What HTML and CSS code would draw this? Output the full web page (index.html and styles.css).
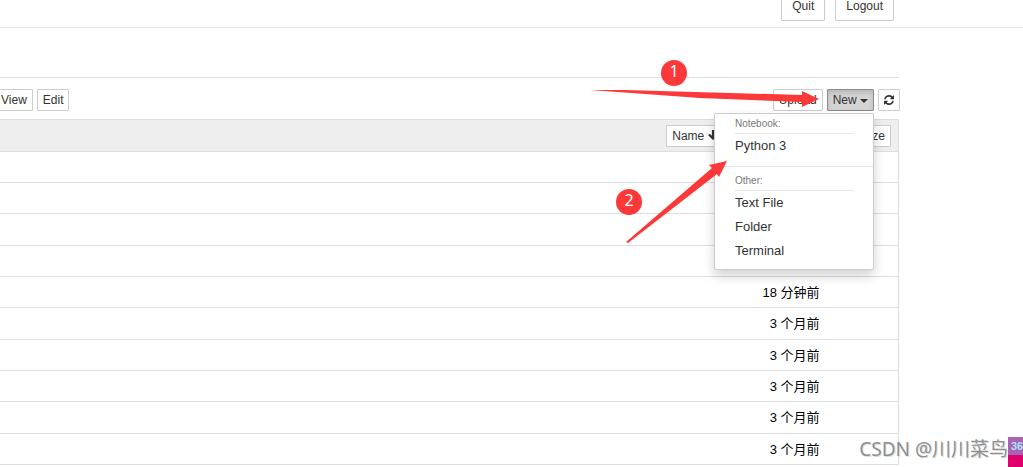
FILE: index.html
```html
<!DOCTYPE html>
<html lang="zh-CN">
<head>
    <meta charset="UTF-8">
    <meta name="viewport" content="width=device-width, initial-scale=1.0">
    <title>Home Page</title>
    <link rel="stylesheet" href="styles.css">
</head>
<body>
    <header class="header">
        <button type="button" class="btn btn-lg">Quit</button>
        <button type="button" class="btn btn-lg">Logout</button>
    </header>

    <main class="container">
        <div class="tabs"></div>
        <div class="toolbar">
            <div class="actions">
                <button type="button" class="btn">View</button>
                <button type="button" class="btn">Edit</button>
            </div>
            <div class="actions">
                <button type="button" class="btn">Upload</button>
                <div class="dropdown">
                    <button type="button" class="btn active" aria-expanded="true">New <span class="caret"></span></button>
                    <ul class="menu">
                        <li class="menu-title">Notebook:</li>
                        <li><a href="#">Python 3</a></li>
                        <li class="divider"></li>
                        <li class="menu-title">Other:</li>
                        <li><a href="#">Text File</a></li>
                        <li><a href="#">Folder</a></li>
                        <li><a href="#">Terminal</a></li>
                    </ul>
                </div>
                <button type="button" class="btn btn-icon" aria-label="Refresh">
                    <svg width="10" height="10" viewBox="0 0 1536 1536" fill="#333"><path d="M1511 928q0 5-1 7-64 268-268 434.500T764 1536q-146 0-282.500-55T238 1324l-129 129q-19 19-45 19t-45-19-19-45V960q0-26 19-45t45-19h448q26 0 45 19t19 45-19 45l-137 137q71 66 161 102t187 36q134 0 250-65t186-179q11-17 53-117 8-23 30-23h192q13 0 22.500 9.500t9.500 22.500zm25-800v448q0 26-19 45t-45 19h-448q-26 0-45-19t-19-45 19-45l138-138Q969 256 768 256q-134 0-250 65T332 500q-11 17-53 117-8 23-30 23H50q-13 0-22.500-9.500T18 608v-7q65-268 270-434.500T768 0q146 0 284 55.500T1297 212l130-129q19-19 45-19t45 19 19 45z"/></svg>
                </button>
            </div>
        </div>

        <table class="files">
            <thead>
                <tr>
                    <th colspan="3">
                        <div class="sort">
                            <button type="button" class="btn">Name <svg width="10" height="10" viewBox="0 0 10 10"><path d="M5 0v8M1 4.500l4 4 4-4" fill="none" stroke="#333" stroke-width="2.200"/></svg></button>
                            <button type="button" class="btn">Last Modified</button>
                            <button type="button" class="btn">File size</button>
                        </div>
                    </th>
                </tr>
            </thead>
            <tbody>
                <tr><td></td><td class="modified"></td><td class="size"></td></tr>
                <tr><td></td><td class="modified"></td><td class="size"></td></tr>
                <tr><td></td><td class="modified"></td><td class="size"></td></tr>
                <tr><td></td><td class="modified"></td><td class="size"></td></tr>
                <tr><td></td><td class="modified">18 分钟前</td><td class="size"></td></tr>
                <tr><td></td><td class="modified">3 个月前</td><td class="size"></td></tr>
                <tr><td></td><td class="modified">3 个月前</td><td class="size"></td></tr>
                <tr><td></td><td class="modified">3 个月前</td><td class="size"></td></tr>
                <tr><td></td><td class="modified">3 个月前</td><td class="size"></td></tr>
                <tr><td></td><td class="modified">3 个月前</td><td class="size"></td></tr>
            </tbody>
        </table>
    </main>

    <!-- numbered steps and arrows -->
    <svg class="steps" width="240" height="190" viewBox="585 55 240 190">
        <path d="M590 90L625 90L802 95V91L819 99L802 107V102L700 98Z"/>
        <path d="M626 242L712 168L709 165L727 161L719 177L717 174L628 243Z"/>
        <circle cx="674" cy="73" r="13"/>
        <circle cx="629" cy="202" r="13"/>
        <text x="674" y="77">1</text>
        <text x="629" y="206">2</text>
    </svg>

    <div class="corner">
        <span class="watermark">CSDN @川川菜鸟</span>
        <div class="meter"><span>36</span></div>
    </div>
</body>
</html>
```

FILE: styles.css
```css
* {
    box-sizing: border-box;
}

body {
    margin: 0;
    height: 100vh;
    overflow: hidden;
    background: #fff;
    color: #000;
    font-family: "Liberation Sans", "Noto Sans CJK SC", sans-serif;
    font-size: 13px;
    line-height: 20px;
}

.header {
    display: flex;
    justify-content: flex-end;
    align-items: flex-end;
    gap: 10px;
    height: 28px;
    padding: 0 129px 6px 0;
    border-bottom: 1px solid #e7e7e7;
}

.btn {
    height: 22px;
    padding: 0 5px;
    border: 1px solid #ccc;
    border-radius: 1px;
    background: #fff;
    color: #333;
    font-family: inherit;
    font-size: 12px;
    line-height: 18px;
    white-space: nowrap;
    cursor: pointer;
}

.btn-lg {
    height: 30px;
    padding: 0 10px;
}

.btn-icon svg {
    display: block;
}

.btn.active {
    border-color: #8c8c8c;
    background: #d4d4d4;
    box-shadow: inset 0 3px 5px rgba(0, 0, 0, 0.125);
}

.caret {
    display: inline-block;
    vertical-align: middle;
    border-top: 4px solid #333;
    border-left: 4px solid transparent;
    border-right: 4px solid transparent;
}

.container {
    margin-right: 124px;
}

.tabs {
    height: 50px;
    border-bottom: 1px solid #ddd;
}

.toolbar {
    display: flex;
    justify-content: space-between;
    margin: 0 -1px 0 -5px;
    padding: 11px 0 8px;
}

.actions {
    display: flex;
    gap: 4px;
}

.dropdown {
    position: relative;
}

.menu {
    position: absolute;
    top: 24px;
    right: 0;
    z-index: 1;
    width: 160px;
    margin: 0;
    padding: 0 0 6px;
    border: 1px solid #ccc;
    border-radius: 2px;
    background: #fff;
    box-shadow: 0 6px 12px rgba(0, 0, 0, 0.175);
    list-style: none;
}

.menu a {
    display: block;
    padding: 2px 20px;
    color: #333;
    text-decoration: none;
}

.menu-title {
    margin: 0 20px;
    border-bottom: 1px solid #e5e5e5;
    color: #777;
    font-size: 10px;
    line-height: 19px;
}

.divider {
    height: 1px;
    margin: 8px 0 4px;
    background: #e5e5e5;
}

.files {
    width: 100%;
    border: 1px solid #ddd;
    border-left: 0;
    border-collapse: collapse;
}

.files th {
    height: 32px;
    padding: 0 7px 0 0;
    background: #eee;
    font-weight: normal;
}

.sort {
    display: flex;
    justify-content: flex-end;
    gap: 14px;
}

.files tr {
    height: 31px;
    border-bottom: 1px solid #ddd;
}

.files tbody tr:nth-child(3n) {
    height: 32px;
}

.files td {
    padding: 1px 0 0;
}

.files .modified {
    width: 160px;
    text-align: right;
}

.files .size {
    width: 79px;
}

.steps {
    position: absolute;
    top: 55px;
    left: 585px;
    z-index: 2;
    fill: #fc3838;
    pointer-events: none;
}

.steps text {
    fill: #fff;
    font-family: "Noto Sans", sans-serif;
    font-size: 16px;
    text-anchor: middle;
}

.corner {
    position: absolute;
    right: 0;
    bottom: 0;
    display: flex;
    height: 30px;
}

.watermark {
    color: #8f8f8f;
    font-family: "Noto Sans", "Noto Sans CJK SC", sans-serif;
    font-size: 19px;
    line-height: 24px;
    text-shadow: 1px 1px 0 #ddd;
}

.meter {
    width: 15px;
    overflow: hidden;
    background: #e0006c;
}

.meter span {
    display: block;
    padding-left: 3px;
    background: #a864b0;
    color: #a8e4ff;
    font-size: 11px;
    font-weight: bold;
    line-height: 18px;
}
```
